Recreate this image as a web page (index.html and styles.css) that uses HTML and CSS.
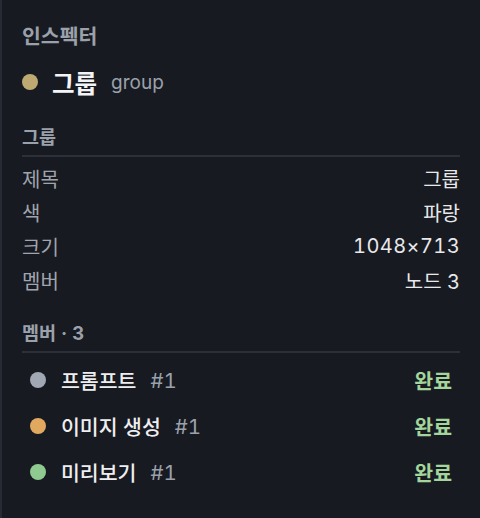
FILE: index.html
```html
<!DOCTYPE html>
<html lang="ko">
<head>
<meta charset="utf-8">
<title>인스펙터</title>
<link rel="stylesheet" href="styles.css">
</head>
<body>
<aside class="panel">
  <h1 class="title">인스펙터</h1>
  <div class="head">
    <span class="dot dot-tan"></span>
    <span class="head-name">그룹</span>
    <span class="head-type">group</span>
  </div>

  <h2 class="section">그룹</h2>
  <dl class="props">
    <div class="prop"><dt>제목</dt><dd>그룹</dd></div>
    <div class="prop"><dt>색</dt><dd>파랑</dd></div>
    <div class="prop"><dt>크기</dt><dd class="num">1048×713</dd></div>
    <div class="prop"><dt>멤버</dt><dd>노드 3</dd></div>
  </dl>

  <h2 class="section section-members">멤버 · 3</h2>
  <ul class="members">
    <li class="member">
      <span class="dot dot-gray"></span>
      <span class="member-name">프롬프트</span>
      <span class="member-id">#1</span>
      <span class="member-status">완료</span>
    </li>
    <li class="member">
      <span class="dot dot-orange"></span>
      <span class="member-name">이미지 생성</span>
      <span class="member-id">#1</span>
      <span class="member-status">완료</span>
    </li>
    <li class="member">
      <span class="dot dot-green"></span>
      <span class="member-name">미리보기</span>
      <span class="member-id">#1</span>
      <span class="member-status">완료</span>
    </li>
  </ul>
</aside>
</body>
</html>
```
FILE: styles.css
```css
html, body {
  margin: 0;
  padding: 0;
  background: #171a21;
}

body {
  width: 480px;
  height: 518px;
  font-family: "Inter", "Noto Sans CJK KR", sans-serif;
  font-variant-numeric: tabular-nums;
  color: #e8e8ea;
}

.panel {
  box-sizing: border-box;
  height: 518px;
  border-left: 2px solid #272a33;
  padding: 24px 20px 0 20px;
}

.title {
  margin: 0;
  height: 26px;
  line-height: 26px;
  font-size: 20.5px;
  font-weight: 700;
  color: #9ba1ab;
}

.head {
  margin-top: 16px;
  height: 32px;
  display: flex;
  align-items: center;
  gap: 14px;
}

.dot {
  flex: none;
  width: 16px;
  height: 16px;
  border-radius: 50%;
}

.dot-tan { background: #bfa972; }
.dot-gray { background: #a1a7b3; }
.dot-orange { background: #e1a85f; }
.dot-green { background: #8fca91; }

.head-name {
  font-size: 24.5px;
  font-weight: 700;
  color: #f4f4f6;
}

.head-type {
  font-size: 19px;
  color: #9ba1ab;
}

.section {
  margin: 28px 0 0 0;
  height: 22px;
  line-height: 22px;
  padding-bottom: 7px;
  border-bottom: 2px solid #2d3039;
  font-size: 18.5px;
  font-weight: 700;
  color: #9ba1ab;
}

.section-members {
  margin-top: 25px;
}

.props {
  margin: 4px 0 0 0;
}

.prop {
  height: 34px;
  display: flex;
  align-items: center;
  justify-content: space-between;
  font-size: 20px;
}

.prop dt {
  color: #a0a4ad;
}

.prop dd {
  margin: 0;
  color: #e8e8ea;
}

.prop .num {
  letter-spacing: 0.4px;
}

.members {
  list-style: none;
  margin: 4px 0 0 0;
  padding: 0;
}

.member {
  height: 46px;
  display: flex;
  align-items: center;
  padding: 0 8px;
  font-size: 20.5px;
}

.member-name {
  margin-left: 15px;
  font-weight: 500;
  color: #eeeef0;
}

.member-id {
  margin-left: 14px;
  color: #9ba1ab;
}

.member-status {
  margin-left: auto;
  font-weight: 600;
  color: #a4d59d;
}
```
